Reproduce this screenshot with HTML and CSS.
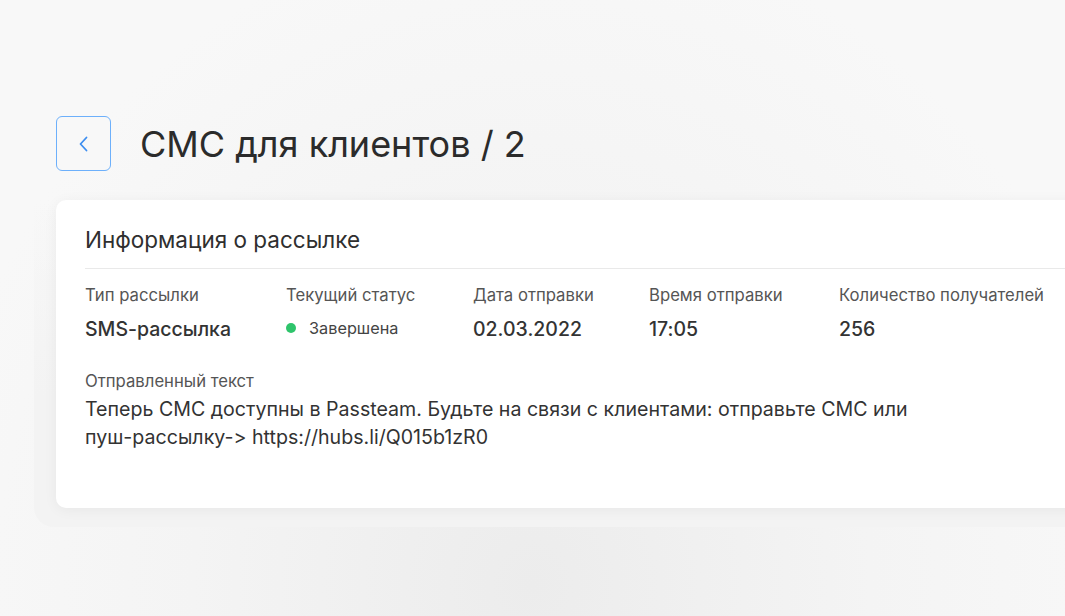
FILE: index.html
```html
<!DOCTYPE html>
<html lang="ru">
<head>
  <meta charset="UTF-8">
  <meta name="viewport" content="width=device-width, initial-scale=1.0">
  <title>СМС для клиентов / 2</title>
  <link rel="stylesheet" href="styles.css">
</head>
<body>
  <div class="page">
    <!-- Заголовок страницы -->
    <div class="page-header">
      <button class="back-btn" type="button">
        <svg width="16" height="18" viewBox="0 0 16 18" fill="none">
          <path d="M10.5 2.5 L4.5 9 L10.5 15.5" stroke="#3d8ef0" stroke-width="1.8" stroke-linecap="round" stroke-linejoin="round"/>
        </svg>
      </button>
      <h1>СМС для клиентов / 2</h1>
    </div>

    <!-- Карточка с информацией -->
    <div class="card-wrap">
      <div class="card">
        <h2 class="card-title">Информация о рассылке</h2>

        <div class="info-row">
          <div class="info-item col-type">
            <div class="info-label">Тип рассылки</div>
            <div class="info-value">SMS-рассылка</div>
          </div>
          <div class="info-item col-status">
            <div class="info-label">Текущий статус</div>
            <div class="status"><span class="status-dot"></span>Завершена</div>
          </div>
          <div class="info-item col-date">
            <div class="info-label">Дата отправки</div>
            <div class="info-value">02.03.2022</div>
          </div>
          <div class="info-item col-time">
            <div class="info-label">Время отправки</div>
            <div class="info-value">17:05</div>
          </div>
          <div class="info-item">
            <div class="info-label">Количество получателей</div>
            <div class="info-value">256</div>
          </div>
        </div>

        <div class="message">
          <div class="info-label">Отправленный текст</div>
          <p class="message-text">Теперь СМС доступны в Passteam. Будьте на связи с клиентами: отправьте СМС или <span class="nowrap">пуш-рассылку-&gt;</span> https://hubs.li/Q015b1zR0</p>
        </div>
      </div>
    </div>
  </div>
</body>
</html>
```

FILE: styles.css
```css
/* Общие стили */
body {
  margin: 0;
  font-family: Inter, "Noto Sans", Arial, sans-serif;
  font-variant-ligatures: none;
  font-feature-settings: "calt" 0;
  background: radial-gradient(ellipse at 50% 95%, #ececec 0%, #f4f4f4 45%, #f8f8f8 80%);
  background-color: #f8f8f8;
  color: #2f2f2f;
  min-height: 100vh;
  overflow: hidden;
}

.page {
  padding: 116px 0 0 56px;
}

/* Заголовок */
.page-header {
  display: flex;
  align-items: center;
  gap: 29px;
}

.back-btn {
  width: 55px;
  height: 55px;
  border: 1px solid #6db0fb;
  border-radius: 6px;
  background: #f8f8f8;
  display: flex;
  align-items: center;
  justify-content: center;
  padding: 0;
  cursor: pointer;
}

h1 {
  margin: 0;
  font-size: 36px;
  font-weight: 400;
  color: #2b2b2b;
}

/* Карточка */
.card-wrap {
  margin: 29px 0 0 -22px;
  padding: 0 0 19px 22px;
  width: 1060px;
  border-radius: 0 0 20px 20px;
  background: linear-gradient(to bottom, rgba(243, 243, 243, 0) 0%, #f3f3f3 60%);
}

.card {
  background: #ffffff;
  border-radius: 10px 0 0 10px;
  padding: 26px 0 55px 29px;
  box-shadow: 0 2px 14px rgba(0, 0, 0, 0.05);
  height: 227px;
}

.card-title {
  margin: 0;
  padding-bottom: 15px;
  font-size: 22.5px;
  font-weight: 400;
  line-height: 27px;
  color: #2f2f2f;
  border-bottom: 1px solid #e9e9e9;
}

.info-row {
  display: flex;
  margin-top: 16px;
}

.col-type { width: 201px; }
.col-status { width: 187px; }
.col-date { width: 176px; }
.col-time { width: 190px; }

.info-label {
  font-size: 16.7px;
  color: #555;
  line-height: 20px;
}

.info-value {
  margin-top: 12px;
  font-size: 19.5px;
  font-weight: 500;
  color: #333;
  line-height: 24px;
}

.status {
  margin-top: 12px;
  font-size: 16.3px;
  color: #444;
  line-height: 22px;
  display: flex;
  align-items: center;
}

.status-dot {
  width: 10px;
  height: 10px;
  border-radius: 50%;
  background: #2ec46b;
  margin: 0 13px 0 0;
}

/* Текст сообщения */
.message {
  margin-top: 30px;
}

.message-text {
  margin: 4px 0 0;
  font-size: 19.6px;
  line-height: 28px;
  color: #333;
  max-width: 860px;
}

.nowrap {
  white-space: nowrap;
}
```
